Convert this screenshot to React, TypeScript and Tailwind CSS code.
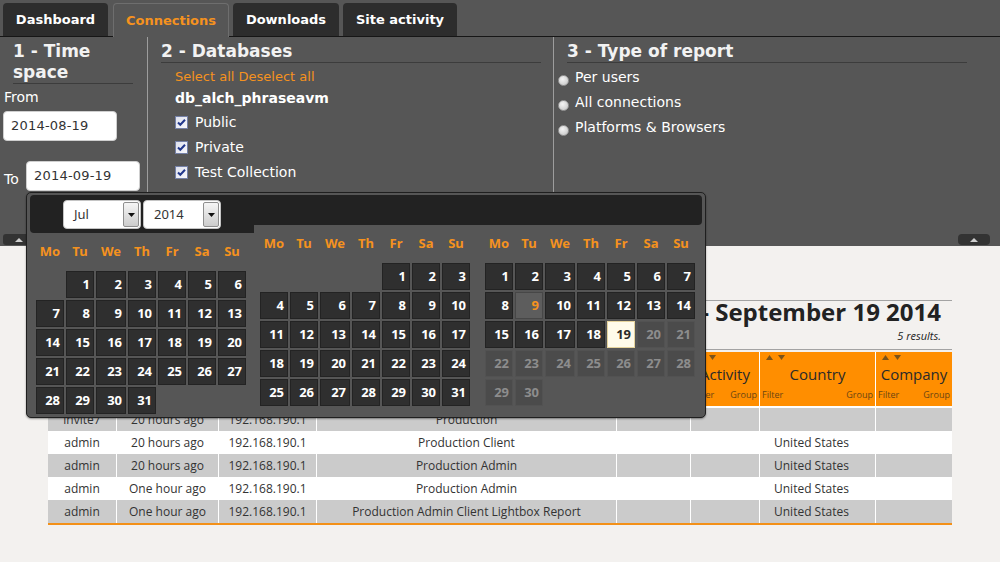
import React from 'react';

type Cell = { d: number; kind: 'normal' | 'hover' | 'today' | 'off' } | null;

const dayNames = ['Mo', 'Tu', 'We', 'Th', 'Fr', 'Sa', 'Su'];

function buildMonth(offset: number, count: number, kindOf?: (d: number) => 'normal' | 'hover' | 'today' | 'off'): Cell[] {
  const cells: Cell[] = [];
  for (let i = 0; i < offset; i++) cells.push(null);
  for (let d = 1; d <= count; d++) cells.push({ d, kind: kindOf ? kindOf(d) : 'normal' });
  return cells;
}

const cellStyles = {
  normal: 'border-[#232323] bg-[#2f2f2f] text-white',
  hover: 'border-[#474747] bg-[#5d5d5d] text-[#f5921e]',
  today: 'border-[#e6d49c] bg-[#fffbea] text-[#2a2a2a]',
  off: 'border-[#525252] bg-[#4b4b4b] text-[#8d8d8d]',
};

function MonthGrid({ cells }: { cells: Cell[] }) {
  return (
    <div>
      <div className="grid h-[38px] grid-cols-[28px_28px_30px_28px_28px_28px_28px] gap-x-[2px] items-center">
        {dayNames.map((n) => (
          <span key={n} className="text-center text-[13px] font-bold text-[#f5921e]">
            {n}
          </span>
        ))}
      </div>
      <div className="grid grid-cols-[28px_28px_30px_28px_28px_28px_28px] gap-x-[2px] gap-y-[2px]">
        {cells.map((c, i) =>
          c ? (
            <div
              key={i}
              className={`flex h-[27px] items-center justify-end border pr-[3px] text-[13px] font-bold ${cellStyles[c.kind]}`}
            >
              {c.d}
            </div>
          ) : (
            <div key={i} className="h-[27px]" />
          ),
        )}
      </div>
    </div>
  );
}

function Select({ value }: { value: string }) {
  return (
    <div className="flex h-[29px] w-[78px] overflow-hidden rounded-[4px] border border-[#c4c4c4] bg-white">
      <span className="flex flex-1 items-center pl-[10px] text-[13px] text-[#333]">{value}</span>
      <span className="my-[1px] mr-[1px] flex w-[16px] items-center justify-center rounded-[2px] border border-[#8f8f8f] bg-gradient-to-b from-[#f6f6f6] to-[#cdcdcd]">
        <svg width="7" height="4" viewBox="0 0 7 4">
          <path d="M0 0h7L3.5 4z" fill="#111" />
        </svg>
      </span>
    </div>
  );
}

function DatePicker() {
  const jul = buildMonth(1, 31);
  const aug = buildMonth(4, 31);
  const sep = buildMonth(0, 30, (d) => (d === 9 ? 'hover' : d === 19 ? 'today' : d > 19 ? 'off' : 'normal'));
  return (
    <div className="absolute left-[26px] top-[192px] h-[226px] w-[680px] rounded-[5px] border border-[#1f1f1f] bg-[#565656] px-[3px] pt-[2px] shadow-[0_1px_2px_rgba(0,0,0,0.4)]">
      <div className="flex">
        <div className="w-[224px]">
          <div className="flex h-[38px] gap-[2px] rounded-l-[4px] bg-[#222] pl-[33px] pt-[5px]">
            <Select value="Jul" />
            <Select value="2014" />
          </div>
          <div className="pl-[6px]">
            <MonthGrid cells={jul} />
          </div>
        </div>
        <div className="w-[224px]">
          <div className="h-[30px] bg-[#222]" />
          <div className="pl-[6px]">
            <MonthGrid cells={aug} />
          </div>
        </div>
        <div className="w-[224px]">
          <div className="h-[30px] rounded-r-[4px] bg-[#222]" />
          <div className="pl-[7px]">
            <MonthGrid cells={sep} />
          </div>
        </div>
      </div>
    </div>
  );
}

function Check() {
  return (
    <span className="flex h-[13px] w-[13px] items-center justify-center border border-[#7480a6] bg-gradient-to-br from-[#dde1ee] to-[#f7f7fb]">
      <svg width="9" height="9" viewBox="0 0 9 9">
        <path d="M1 4.5l2.3 2.3L8 1.8" fill="none" stroke="#21378c" strokeWidth="2" />
      </svg>
    </span>
  );
}

function Radio() {
  return (
    <span className="mt-[5px] h-[11px] w-[11px] rounded-full border border-[#9a9a9a] bg-[radial-gradient(circle_at_40%_35%,#f4f4f4,#c2c2c2)]" />
  );
}

function Panel() {
  return (
    <div className="h-[246px] bg-[#565656] font-['DejaVu_Sans',sans-serif] text-white">
      <div className="flex h-[37px] items-end gap-[4px] border-b border-[#161616] pl-[3px] pt-[3px]">
        <div className="flex h-[33px] w-[105px] items-center justify-center rounded-t-[4px] bg-[#2d2d2d] pt-px text-[13px] font-bold">
          Dashboard
        </div>
        <div className="relative -mb-px ml-[1px] flex h-[34px] w-[116px] items-center justify-center rounded-t-[4px] border border-b-0 border-[#6e6e6e] bg-[#565656] text-[13px] font-bold text-[#f5921e]">
          Connections
        </div>
        <div className="flex h-[33px] w-[106px] items-center justify-center rounded-t-[4px] bg-[#2d2d2d] pt-px text-[13px] font-bold">
          Downloads
        </div>
        <div className="flex h-[33px] w-[114px] items-center justify-center rounded-t-[4px] bg-[#2d2d2d] pt-px text-[13px] font-bold">
          Site activity
        </div>
      </div>

      <div className="flex h-[196px]">
        <div className="w-[147px] pt-[3px]">
          <h2 className="ml-[13px] w-[120px] border-b border-[#3c3c3c] pt-px text-[17px] font-bold leading-[21px] text-[#f2f2f2]">
            1 - Time space
          </h2>
          <div className="mt-[5px] pl-[4px] text-[14px] leading-[16px]">From</div>
          <div className="ml-[3px] mt-[6px] flex h-[30px] w-[114px] items-center rounded-[4px] border border-[#cfcfcf] bg-white pl-[7px] text-[13px] tracking-[0.2px] text-[#333]">
            2014-08-19
          </div>
          <div className="mt-[20px] flex items-center">
            <span className="w-[26px] pl-[4px] pt-[6px] text-[14px]">To</span>
            <div className="flex h-[30px] w-[114px] items-center rounded-[4px] border border-[#cfcfcf] bg-white pl-[7px] text-[13px] tracking-[0.2px] text-[#333]">
              2014-09-19
            </div>
          </div>
        </div>

        <div className="w-[406px] border-l border-[#9d9d9d] pt-[3px]">
          <h2 className="ml-[13px] mr-[12px] border-b border-[#3c3c3c] pt-px text-[17px] font-bold leading-[21px] text-[#f2f2f2]">
            2 - Databases
          </h2>
          <div className="ml-[27px] mt-[6px] text-[13px] leading-[16px] text-[#f5921e]">Select all Deselect all</div>
          <div className="ml-[27px] mt-[5px] text-[14px] font-bold leading-[17px]">db_alch_phraseavm</div>
          <div className="mt-[3px]">
            {['Public', 'Private', 'Test Collection'].map((l) => (
              <div key={l} className="ml-[27px] flex h-[25px] items-center gap-[7px] text-[14px]">
                <Check />
                <span>{l}</span>
              </div>
            ))}
          </div>
        </div>

        <div className="flex-1 border-l border-[#9d9d9d] pt-[3px]">
          <h2 className="ml-[13px] mr-[33px] border-b border-[#3c3c3c] pt-px text-[17px] font-bold leading-[21px] text-[#f2f2f2]">
            3 - Type of report
          </h2>
          <div className="mt-[2px]">
            {['Per users', 'All connections', 'Platforms & Browsers'].map((l) => (
              <div key={l} className="ml-[4px] flex h-[25px] items-center gap-[6px] text-[14px]">
                <Radio />
                <span>{l}</span>
              </div>
            ))}
          </div>
        </div>
      </div>

      <div className="flex h-[13px] justify-between pl-[3px] pr-[10px] pt-px">
        <div className="flex h-[11px] w-[32px] items-center justify-center rounded-[3px] bg-[#333]">
          <svg width="8" height="4" viewBox="0 0 8 4">
            <path d="M0 4L4 0l4 4z" fill="#cfcfcf" />
          </svg>
        </div>
        <div className="flex h-[11px] w-[32px] items-center justify-center rounded-[4px] bg-[#333]">
          <svg width="8" height="4" viewBox="0 0 8 4">
            <path d="M0 4L4 0l4 4z" fill="#cfcfcf" />
          </svg>
        </div>
      </div>
    </div>
  );
}

const cols = 'grid grid-cols-[68px_102px_98px_300px_74px_69px_116px_77px]';

const headers = ['Login', 'Date', 'IP', 'Collections', 'Browser', 'Activity', 'Country', 'Company'];

const rows = [
  ['invite7', '20 hours ago', '192.168.190.1', 'Production', ''],
  ['admin', '20 hours ago', '192.168.190.1', 'Production Client', 'United States'],
  ['admin', '20 hours ago', '192.168.190.1', 'Production Admin', 'United States'],
  ['admin', 'One hour ago', '192.168.190.1', 'Production Admin', 'United States'],
  ['admin', 'One hour ago', '192.168.190.1', 'Production Admin Client Lightbox Report', 'United States'],
];

function SortArrows() {
  return (
    <svg width="20" height="5" viewBox="0 0 20 5">
      <path d="M0 5L3.5 0 7 5z" fill="#7c5318" />
      <path d="M12 0h7l-3.5 5z" fill="#7c5318" />
    </svg>
  );
}

function Report() {
  return (
    <div className="ml-[48px] mt-[54px] w-[904px] font-['Open_Sans',sans-serif] text-[#2b2b2b]">
      <div className="border-y border-[#a3a3a3] pb-[7px] pr-[11px] text-right">
        <div className="whitespace-nowrap text-[24px] font-bold leading-[22px] text-[#222]">
          Connections from August 19 2014 - September 19 2014
        </div>
        <div className="mt-[7px] text-[11px] italic leading-[12px] text-[#222]">5 results.</div>
      </div>

      <div className={`${cols} mt-[2px] h-[54px] bg-[#ff8e00]`}>
        {headers.map((h, i) => (
          <div key={h} className={`flex flex-col ${i > 0 ? 'border-l border-white' : ''}`}>
            <div className="flex h-[12px] items-start pl-[6px] pt-[3px]">
              <SortArrows />
            </div>
            <div className="h-[20px] text-center text-[15px] leading-[20px] text-[#2a2a2a]">{h}</div>
            <div className="flex h-[22px] items-center justify-between px-[2px] text-[9px] text-[#6b4512]">
              <span>Filter</span>
              <span>Group</span>
            </div>
          </div>
        ))}
      </div>

      <div className="bg-white pt-[2px]">
        {rows.map((r, ri) => (
          <div key={ri} className={`${cols} h-[23px] text-[12px] leading-[23px] text-[#333] ${ri % 2 === 0 ? 'bg-[#cbcbcb]' : 'bg-white'}`}>
            <div className="text-center">{r[0]}</div>
            <div className="border-l border-white text-center">{r[1]}</div>
            <div className="border-l border-white text-center">{r[2]}</div>
            <div className="border-l border-white text-center">{r[3]}</div>
            <div className="border-l border-white" />
            <div className="border-l border-white" />
            <div className="border-l border-white pl-[14px]">{r[4]}</div>
            <div className="border-l border-white" />
          </div>
        ))}
      </div>
      <div className="h-[2px] bg-[#f39018]" />
    </div>
  );
}

export default function App() {
  return (
    <div className="relative min-h-[562px] w-full overflow-hidden bg-[#f3f1ef]">
      <Panel />
      <Report />
      <DatePicker />
    </div>
  );
}
